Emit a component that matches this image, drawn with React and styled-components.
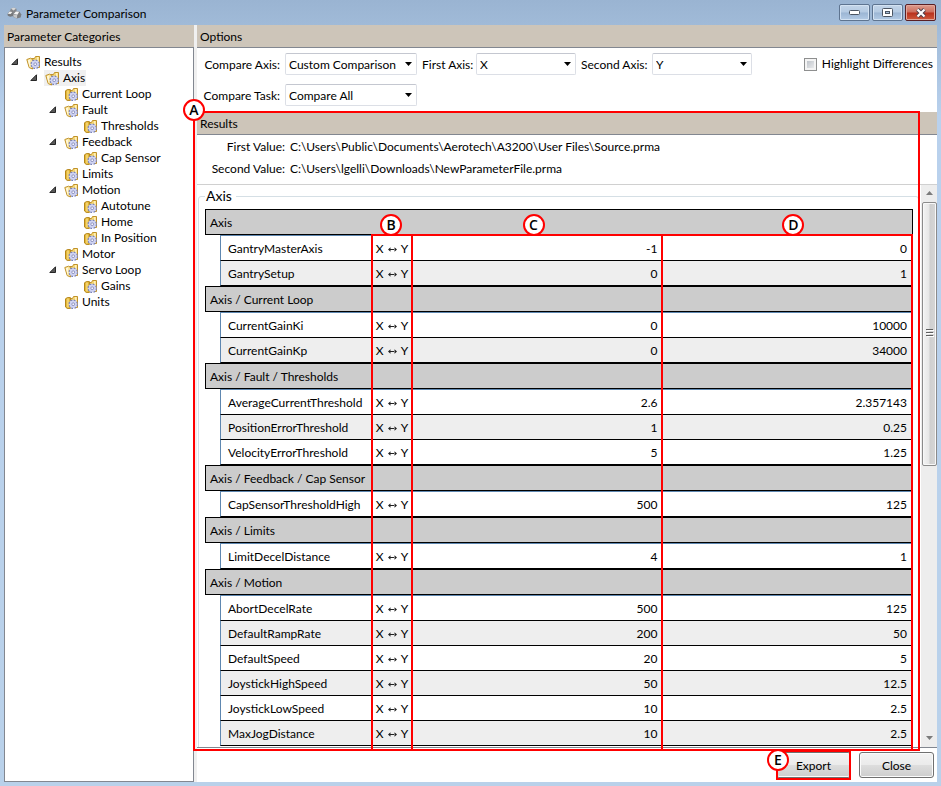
import React from "react";
import styled, { createGlobalStyle, css } from "styled-components";

const RED = "#ff0000";
const TAUPE = "#cdc5b9";
const LINE = "#828790";

const GlobalStyle = createGlobalStyle`
  *, *::before, *::after { box-sizing: border-box; }
  body {
    margin: 0;
    font-family: Lato, "Open Sans", sans-serif;
    font-size: 12px;
    line-height: 16px;
    color: #000;
  }
  button, select, input { font: inherit; color: inherit; }
`;

const Window = styled.div`
  display: flex;
  flex-direction: column;
  height: 100vh;
  padding: 0 4px 4px;
  background: linear-gradient(#9ab4d2 0, #a9c3e0 60px, #b9d1ed 116px, #b9d1ea 100%);
`;

const TitleBar = styled.header`
  display: flex;
  align-items: center;
  flex: none;
  height: 25px;
  padding: 0 1px 0 3px;
  gap: 4px;
`;

const Title = styled.h1`
  flex: 1;
  margin: 0;
  padding-top: 2px;
  font-size: 12px;
  font-weight: 400;
`;

const Caption = styled.div`
  display: flex;
  gap: 2px;
`;

const CaptionButton = styled.button`
  display: grid;
  place-items: center;
  width: 31px;
  height: 17px;
  padding: 0;
  border: 1px solid ${(p) => (p.$close ? "#5a1f24" : "#5e7490")};
  border-radius: 2px;
  box-shadow: inset 0 0 0 1px ${(p) => (p.$close ? "#e2a79b" : "#d3e2f2")};
  background: ${(p) =>
    p.$close
      ? "linear-gradient(#dd9b8d 0, #cd6e5d 48%, #b8301d 52%, #cf5a3d 100%)"
      : "linear-gradient(#c3d5e9 0, #b4cae2 48%, #9bb5d3 52%, #b3cbe5 100%)"};
`;

const Body = styled.main`
  display: flex;
  flex: 1;
  min-height: 0;
  gap: 3px;
  background: #f0f0f0;
`;

const Sidebar = styled.section`
  display: flex;
  flex-direction: column;
  flex: none;
  width: 190px;
`;

const PanelHeader = styled.h2`
  flex: none;
  height: 22px;
  margin: 0;
  padding: 4px 3px 2px;
  background: ${TAUPE};
  font-size: 12px;
  font-weight: 400;
  line-height: 16px;
`;

const Tree = styled.ul`
  flex: 1;
  margin: 0;
  padding: 6px 0 0 6px;
  border: 1px solid ${LINE};
  background: #fff;
  list-style: none;
`;

const Branch = styled.ul`
  margin: 0;
  padding: 0 0 0 19px;
  list-style: none;
`;

const Node = styled.div`
  display: flex;
  align-items: center;
  height: 16px;
`;

const Twisty = styled.span`
  display: flex;
  width: 14px;
`;

const NodeLabel = styled.span`
  display: flex;
  align-items: center;
  gap: 3px;
  height: 16px;
  padding: 0 1px;
  white-space: nowrap;
  background: ${(p) => (p.$selected ? "#f0f0f0" : "transparent")};
`;

const Content = styled.section`
  display: flex;
  flex-direction: column;
  flex: 1;
  min-width: 0;
  background: #fff;
`;

const OptionsBar = styled.div`
  display: flex;
  justify-content: space-between;
  align-items: flex-start;
  flex: none;
  height: 65px;
  padding: 5px 4px 0 0;
  border-top: 1px solid ${LINE};
`;

const OptionGrid = styled.div`
  display: grid;
  grid-template-columns: 83px 132px 49px 100px 66px 100px;
  column-gap: 5px;
  row-gap: 9px;
  align-items: center;
`;

const OptionLabel = styled.label`
  padding-top: 2px;
  text-align: right;
  white-space: nowrap;
`;

const SelectBox = styled.div`
  display: grid;
  grid-template-columns: 1fr 12px;
  align-items: center;
  height: 22px;

  select {
    grid-area: 1 / 1 / 2 / 3;
    width: 100%;
    height: 22px;
    padding: 2px 3px 0;
    border: 1px solid #dcdfe6;
    border-top-color: #c4c7d0;
    border-radius: 2px;
    background: #fff;
    appearance: none;
  }
  svg {
    grid-area: 1 / 2;
    pointer-events: none;
  }
`;

const CheckLabel = styled.label`
  display: flex;
  align-items: center;
  gap: 5px;
  height: 22px;
  white-space: nowrap;

  input {
    width: 13px;
    height: 13px;
    margin: 0;
    border: 1px solid #8e8f8f;
    background: linear-gradient(135deg, #b4bac2, #f4f4f4);
    box-shadow: inset 0 0 0 2px #f4f4f4;
    appearance: none;
  }
`;

const Results = styled.section`
  position: relative;
  display: flex;
  flex-direction: column;
  flex: 1;
  min-height: 0;
`;

const ValueList = styled.dl`
  display: grid;
  grid-template-columns: 88px 1fr;
  column-gap: 5px;
  row-gap: 6px;
  align-content: start;
  flex: none;
  height: 51px;
  margin: 0;
  padding: 4px 0 0;
  border-top: 1px solid ${LINE};
  border-bottom: 1px solid #d0d0d0;

  dt { text-align: right; white-space: nowrap; }
  dd { margin: 0; }
`;

const ScrollArea = styled.div`
  display: flex;
  flex: 1;
  min-height: 0;
  gap: 2px;
  overflow: hidden;
  border-bottom: 1px solid ${LINE};
`;

const Group = styled.fieldset`
  flex: 1;
  min-width: 0;
  height: max-content;
  margin: 3px 0 0 1px;
  padding: 5px 5px 8px 6px;
  border: 1px solid #d5dfe5;
  border-radius: 3px;

  legend {
    padding: 0 4px 0 1px;
    font-size: 14px;
    line-height: 16px;
  }
`;

const Grid = styled.table`
  width: 100%;
  table-layout: fixed;
  border-collapse: separate;
  border-spacing: 0;

  td, th { padding: 2px 0 0; font-weight: 400; white-space: nowrap; }
`;

const IndentCol = styled.col`width: 15px;`;
const NameCol = styled.col`width: 152px;`;
const AxisCol = styled.col`width: 40px;`;

const SectionRow = styled.tr`
  height: 26px;

  th, td {
    border: 0 solid #000;
    border-width: 1px 0;
    background: #ccc;
  }
  td:last-child { border-right-width: 1px; }
  th {
    padding-left: 4px;
    border-left-width: 1px;
    text-align: left;
  }
`;

const ParamRow = styled.tr`
  height: ${(p) => (p.$first ? 26 : 25)}px;

  td, th {
    border-bottom: 1px solid #000;
    background: ${(p) => (p.$shaded ? "#eee" : "#fff")};
    ${(p) => p.$first && css`border-top: 1px solid #5e87b0;`}
  }
  td:last-child { border-right: 1px solid #000; }
  th {
    padding-left: 7px;
    border-left: 1px solid #5e87b0;
    text-align: left;
  }
  td:first-child {
    border: 0;
    background: #fff;
  }
`;

const AxisCell = styled.td`
  text-align: center;
`;

const NumberCell = styled.td`
  && { padding-right: 5px; }
  text-align: right;
`;

const Scrollbar = styled.div`
  display: flex;
  flex-direction: column;
  align-items: center;
  width: 16px;
  padding: 6px 0 7px;
  gap: 7px;
  background: #ededed;
`;

const Track = styled.div`
  flex: 1;
  align-self: stretch;
  padding: 0 0 0 1px;
`;

const Thumb = styled.div`
  display: grid;
  place-items: center;
  height: 50%;
  border: 1px solid #8b8b8b;
  border-radius: 2px;
  box-shadow: inset 0 0 0 1px #f8f8f8;
  background: linear-gradient(90deg, #f3f3f3 0, #e6e6e6 48%, #cfcfcf 52%, #d6d6d6 100%);
`;

const Footer = styled.footer`
  display: flex;
  justify-content: flex-end;
  align-items: center;
  flex: none;
  gap: 8px;
  height: 34px;
  padding: 0 3px 0 0;
`;

const PushButton = styled.button`
  width: 75px;
  height: 26px;
  padding: 2px 0 0;
  border: 1px solid #707070;
  border-radius: 3px;
  box-shadow: inset 0 0 0 1px #fbfbfb;
  background: linear-gradient(#f3f3f3 0, #ebebeb 48%, #dddddd 52%, #cdcdcd 100%);
`;

const Marked = styled.div`
  position: relative;
  display: flex;

  &::after {
    content: "";
    position: absolute;
    inset: -2px 0;
    border: 2px solid ${RED};
    pointer-events: none;
  }
`;

const ResultsOutline = styled.div`
  position: absolute;
  inset: -1px 17px -3px -4px;
  border: 2px solid ${RED};
  pointer-events: none;
`;

const ColumnOutlines = styled.div`
  position: absolute;
  inset: 122px 24px -2px 174px;
  display: grid;
  grid-template-columns: 40px 1fr 1fr;
  border-top: 2px solid ${RED};
  border-right: 2px solid ${RED};
  pointer-events: none;
`;

const ColumnOutline = styled.div`
  position: relative;
  border-left: 2px solid ${RED};
`;

const Badge = styled.span`
  position: absolute;
  z-index: 1;
  left: ${(p) => p.$left};
  top: ${(p) => p.$top};
  display: grid;
  place-items: center;
  width: 22px;
  height: 22px;
  margin: -11px 0 0 -12px;
  border: 2px solid ${RED};
  border-radius: 50%;
  background: #fff;
  font-family: "Open Sans", sans-serif;
  font-size: 14px;
  font-weight: 600;
  line-height: 18px;
`;

function AppIcon() {
  return (
    <svg width="15" height="12" viewBox="0 0 15 12" aria-hidden="true">
      <path d="M3 4 4 1.4 7 .6 9.4 1.8 9.8 6 6 8 3.2 6.5Z" fill="#85878a" />
      <path d="M4 1.6 7 .6 9 1.8 6.4 3.6Z" fill="#d6d7d8" />
      <path d="M.5 7 2.4 4.2 5.6 4.6 6.4 9 3.2 9.8 .8 8.8Z" fill="#77797c" />
      <path d="M.8 6.8 2.6 4.4 5.4 5 3.6 7Z" fill="#f2f2f2" />
      <path d="M6 7.4 8.4 4.2 12.4 4.4 14.4 7.4 13.6 10.6 9.6 11.6 6.4 10Z" fill="#7b7d80" />
      <path d="M6.6 7 8.8 4.6 12.2 4.8 10.4 7.8Z" fill="#f6f6f6" />
      <path d="M6.2 7.4 10.2 8 10 11.4 6.6 10Z" fill="#c4c6c8" />
    </svg>
  );
}

function FolderIcon({ open }) {
  return (
    <svg width="15" height="15" viewBox="0 0 15 15" aria-hidden="true">
      <path d="M5.5 3.5H8.5L9.5 1.5H13.5V12.5H5.5Z" fill="#f7d873" stroke="#c0922a" />
      <path d="M11 2h1.6v10H11Z" fill="#fff0b8" />
      {open ? (
        <>
          <path d="M.8 4.5 4.5 3.2 6.5 4.4V14L3.2 12.6Z" fill="#fbe7a0" stroke="#c0922a" />
          <path d="M2 5.2 3.8 4.6V12L3.6 12Z" fill="#fffbe6" />
        </>
      ) : (
        <>
          <path d="M1.5 3.8 3.4 2.6H6.4V13.4H3.2L1.5 12Z" fill="#e5b93a" stroke="#b5861a" />
          <path d="M3.4 3.6H4.6V12.6H3.4Z" fill="#f9e193" />
        </>
      )}
      <circle cx="9.2" cy="9.2" r="4.1" fill="#cfd3f0" stroke="#7a82b8" strokeWidth="1.3" strokeDasharray="1.8 1.42" />
      <circle cx="9.2" cy="9.2" r="3.4" fill="#cfd3f3" />
      <circle cx="9.2" cy="9.2" r="1.4" fill="#f6f6fd" stroke="#7d83b3" strokeWidth=".8" />
    </svg>
  );
}

function ExpandedIcon() {
  return (
    <svg width="8" height="8" viewBox="0 0 8 8" aria-hidden="true">
      <path d="M6.5 .8V6.5H.8Z" fill="#595959" stroke="#262626" />
    </svg>
  );
}

function DropIcon() {
  return (
    <svg width="7" height="4" viewBox="0 0 7 4" aria-hidden="true">
      <path d="M0 0H7L3.5 4Z" fill="#000" />
    </svg>
  );
}

function ScrollIcon({ down }) {
  return (
    <svg width="7" height="4" viewBox="0 0 7 4" aria-hidden="true">
      <path d={down ? "M0 0H7L3.5 4Z" : "M0 4H7L3.5 0Z"} fill="#7b7b7b" />
    </svg>
  );
}

function GripIcon() {
  return (
    <svg width="8" height="9" viewBox="0 0 8 9" aria-hidden="true">
      <path d="M0 .5H7M0 3.5H7M0 6.5H7" stroke="#5f5f5f" />
      <path d="M1 1.5H8M1 4.5H8M1 7.5H8" stroke="#fff" />
    </svg>
  );
}

function ArrowsIcon() {
  return (
    <svg width="9" height="5" viewBox="0 0 9 5" aria-hidden="true">
      <path d="M0 2.5 2.5 .2V4.8ZM9 2.5 6.5 .2V4.8ZM2 2H7V3H2Z" fill="#222" />
    </svg>
  );
}

const AxisPair = styled.span`
  display: inline-flex;
  align-items: center;
  gap: 4px;
`;

const leaf = (label) => ({ label });

const categories = [
  {
    label: "Results",
    children: [
      {
        label: "Axis",
        selected: true,
        children: [
          leaf("Current Loop"),
          { label: "Fault", children: [leaf("Thresholds")] },
          { label: "Feedback", children: [leaf("Cap Sensor")] },
          leaf("Limits"),
          { label: "Motion", children: [leaf("Autotune"), leaf("Home"), leaf("In Position")] },
          leaf("Motor"),
          { label: "Servo Loop", children: [leaf("Gains")] },
          leaf("Units"),
        ],
      },
    ],
  },
];

const sections = [
  ["Axis", [["GantryMasterAxis", "-1", "0"], ["GantrySetup", "0", "1"]]],
  ["Axis / Current Loop", [["CurrentGainKi", "0", "10000"], ["CurrentGainKp", "0", "34000"]]],
  [
    "Axis / Fault / Thresholds",
    [
      ["AverageCurrentThreshold", "2.6", "2.357143"],
      ["PositionErrorThreshold", "1", "0.25"],
      ["VelocityErrorThreshold", "5", "1.25"],
    ],
  ],
  ["Axis / Feedback / Cap Sensor", [["CapSensorThresholdHigh", "500", "125"]]],
  ["Axis / Limits", [["LimitDecelDistance", "4", "1"]]],
  [
    "Axis / Motion",
    [
      ["AbortDecelRate", "500", "125"],
      ["DefaultRampRate", "200", "50"],
      ["DefaultSpeed", "20", "5"],
      ["JoystickHighSpeed", "50", "12.5"],
      ["JoystickLowSpeed", "10", "2.5"],
      ["MaxJogDistance", "10", "2.5"],
    ],
  ],
];

function TreeItem({ item }) {
  return (
    <li>
      <Node>
        <Twisty>{item.children && <ExpandedIcon />}</Twisty>
        <NodeLabel $selected={item.selected}>
          <FolderIcon open={Boolean(item.children)} />
          {item.label}
        </NodeLabel>
      </Node>
      {item.children && (
        <Branch>
          {item.children.map((child) => (
            <TreeItem key={child.label} item={child} />
          ))}
        </Branch>
      )}
    </li>
  );
}

function Dropdown({ id, label, value }) {
  return (
    <>
      <OptionLabel htmlFor={id}>{label}</OptionLabel>
      <SelectBox>
        <select id={id} defaultValue={value}>
          <option>{value}</option>
        </select>
        <DropIcon />
      </SelectBox>
    </>
  );
}

function ParameterTable() {
  return (
    <Grid>
      <colgroup>
        <IndentCol />
        <NameCol />
        <AxisCol />
        <col />
        <col />
      </colgroup>
      {sections.map(([name, rows]) => (
        <tbody key={name}>
          <SectionRow>
            <th colSpan={2} scope="rowgroup">{name}</th>
            <td />
            <td />
            <td />
          </SectionRow>
          {rows.map(([param, first, second], i) => (
            <ParamRow key={param} $first={i === 0} $shaded={i % 2 === 1}>
              <td />
              <th scope="row">{param}</th>
              <AxisCell>
                <AxisPair>X<ArrowsIcon />Y</AxisPair>
              </AxisCell>
              <NumberCell>{first}</NumberCell>
              <NumberCell>{second}</NumberCell>
            </ParamRow>
          ))}
        </tbody>
      ))}
    </Grid>
  );
}

export default function App() {
  return (
    <Window>
      <GlobalStyle />
      <TitleBar>
        <AppIcon />
        <Title>Parameter Comparison</Title>
        <Caption>
          <CaptionButton aria-label="Minimize">
            <svg width="11" height="5" viewBox="0 0 11 5" aria-hidden="true">
              <rect x=".5" y=".5" width="10" height="4" rx="1" fill="#fff" stroke="#4b5563" />
            </svg>
          </CaptionButton>
          <CaptionButton aria-label="Maximize">
            <svg width="11" height="9" viewBox="0 0 11 9" aria-hidden="true">
              <rect x=".5" y=".5" width="10" height="8" rx="1" fill="#fff" stroke="#4b5563" />
              <rect x="3.5" y="3.5" width="4" height="2" fill="#a5bdd8" stroke="#4b5563" />
            </svg>
          </CaptionButton>
          <CaptionButton $close aria-label="Close window">
            <svg width="12" height="10" viewBox="0 0 12 10" aria-hidden="true">
              <path d="M2.5 1.5 9.5 8.5M9.5 1.5 2.5 8.5" stroke="#4b3f4b" strokeWidth="4" />
              <path d="M2.5 1.5 9.5 8.5M9.5 1.5 2.5 8.5" stroke="#fff" strokeWidth="2.2" />
            </svg>
          </CaptionButton>
        </Caption>
      </TitleBar>
      <Body>
        <Sidebar>
          <PanelHeader>Parameter Categories</PanelHeader>
          <Tree>
            {categories.map((item) => (
              <TreeItem key={item.label} item={item} />
            ))}
          </Tree>
        </Sidebar>
        <Content>
          <PanelHeader>Options</PanelHeader>
          <OptionsBar>
            <OptionGrid>
              <Dropdown id="compare-axis" label="Compare Axis:" value="Custom Comparison" />
              <Dropdown id="first-axis" label="First Axis:" value="X" />
              <Dropdown id="second-axis" label="Second Axis:" value="Y" />
              <Dropdown id="compare-task" label="Compare Task:" value="Compare All" />
            </OptionGrid>
            <CheckLabel>
              <input type="checkbox" />
              Highlight Differences
            </CheckLabel>
          </OptionsBar>
          <Results>
            <PanelHeader>Results</PanelHeader>
            <ValueList>
              <dt>First Value:</dt>
              <dd>{"C:\\Users\\Public\\Documents\\Aerotech\\A3200\\User Files\\Source.prma"}</dd>
              <dt>Second Value:</dt>
              <dd>{"C:\\Users\\lgelli\\Downloads\\NewParameterFile.prma"}</dd>
            </ValueList>
            <ScrollArea>
              <Group>
                <legend>Axis</legend>
                <ParameterTable />
              </Group>
              <Scrollbar aria-hidden="true">
                <ScrollIcon />
                <Track>
                  <Thumb><GripIcon /></Thumb>
                </Track>
                <ScrollIcon down />
              </Scrollbar>
            </ScrollArea>
            <ResultsOutline />
            <ColumnOutlines>
              <ColumnOutline><Badge $left="50%" $top="-11px">B</Badge></ColumnOutline>
              <ColumnOutline><Badge $left="49%" $top="-11px">C</Badge></ColumnOutline>
              <ColumnOutline><Badge $left="53%" $top="-11px">D</Badge></ColumnOutline>
            </ColumnOutlines>
            <Badge $left="-2px" $top="-2px">A</Badge>
          </Results>
          <Footer>
            <Marked>
              <PushButton>Export</PushButton>
              <Badge $left="3px" $top="8px">E</Badge>
            </Marked>
            <PushButton>Close</PushButton>
          </Footer>
        </Content>
      </Body>
    </Window>
  );
}
